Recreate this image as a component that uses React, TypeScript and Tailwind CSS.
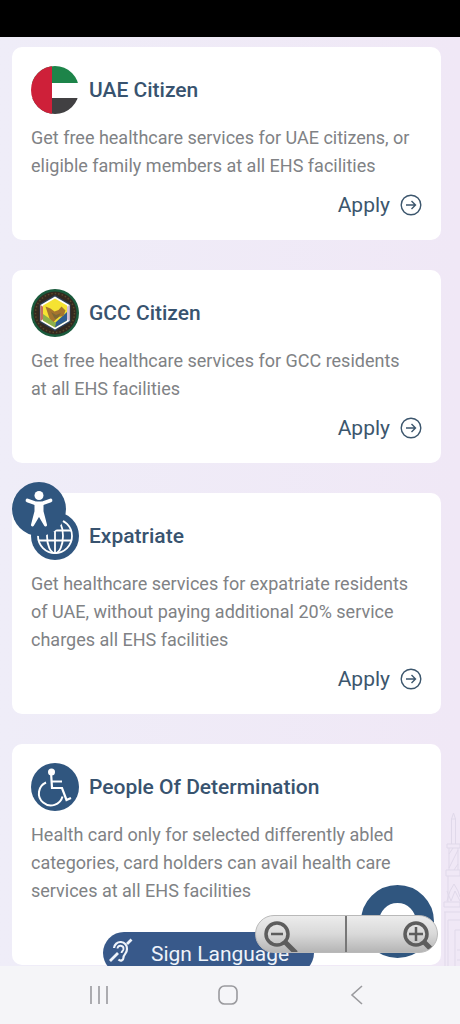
import React from 'react';

interface Service {
  id: string;
  title: string;
  description: string;
  icon: React.ReactNode;
}

const UaeFlag = () => (
  <svg className="size-12 shrink-0" viewBox="0 0 48 48" aria-hidden="true">
    <clipPath id="flag-clip">
      <circle cx="24" cy="24" r="24" />
    </clipPath>
    <g clipPath="url(#flag-clip)">
      <rect width="48" height="48" fill="#fff" />
      <rect width="48" height="17" fill="#1d8449" />
      <rect y="32" width="48" height="16" fill="#414042" />
      <rect width="21" height="48" fill="#ce2039" />
    </g>
  </svg>
);

const GccEmblem = () => (
  <svg className="size-12 shrink-0" viewBox="0 0 48 48" aria-hidden="true">
    <circle cx="24" cy="24" r="24" fill="#1a5a3c" />
    <circle cx="24" cy="24" r="21.500" fill="#33291f" />
    <circle cx="24" cy="24" r="19.500" fill="none" stroke="#5a4a2c" strokeWidth="1.500" strokeDasharray="1.5 2" />
    <path d="M24 6l15.500 9v18L24 42 8.500 33V15z" fill="#2b3f55" />
    <path d="M24 7.500l14.500 8.500v16L24 40.500 9.500 32V16z" fill="#fff" />
    <path d="M9.500 16l3 2v12l-3 2z" fill="#c2705f" />
    <path d="M38.500 16l-3 2v12l3 2z" fill="#d3bfd6" />
    <path d="M24 9.500l12 7v15l-12 7-12-7v-15z" fill="#f5e332" />
    <path d="M24 38.500l12-7V23L24 34z" fill="#2f5d92" />
    <path d="M12 25v6.500l12 7 1-4.500z" fill="#8db04c" />
    <path d="M14.500 17.500l5 2 4 3 4-1.500 3-3.500 4 4-2 5.500-5 1-5 5-4-3.500-2-6z" fill="#a5752f" />
    <path d="M20 23l5 3 5-2-3 5-3 1z" fill="#7f6a34" />
  </svg>
);

const GlobeIcon = () => (
  <svg className="size-12 shrink-0" viewBox="0 0 48 48" fill="none" stroke="#fff" strokeWidth="1.800" aria-hidden="true">
    <circle cx="24" cy="24" r="24" fill="#30567f" stroke="none" />
    <circle cx="24" cy="24" r="17" />
    <ellipse cx="24" cy="24" rx="8" ry="17" />
    <path d="M24 7v34M8 18.500h32M8 28.500h32" />
  </svg>
);

const WheelchairIcon = () => (
  <svg className="size-12 shrink-0" viewBox="0 0 48 48" fill="none" stroke="#fff" strokeWidth="2" aria-hidden="true">
    <circle cx="24" cy="24" r="24" fill="#30567f" stroke="none" />
    <circle cx="20.500" cy="9" r="3.500" fill="#fff" stroke="none" />
    <path d="M20 9l1 16h10l4.500 12 4.500-2M20 18.500h11" strokeWidth="2.200" />
    <path d="M15 19.500A12 12 0 1 0 31.500 33.500" />
  </svg>
);

const ArrowCircle = () => (
  <svg className="size-[22px]" viewBox="0 0 22 22" fill="none" stroke="currentColor" strokeWidth="1.400" aria-hidden="true">
    <circle cx="11" cy="11" r="9.800" />
    <path d="M6 11h9.500M11.500 7l4 4-4 4" />
  </svg>
);

const services: Service[] = [
  {
    id: 'uae',
    title: 'UAE Citizen',
    description: 'Get free healthcare services for UAE citizens, or eligible family members at all EHS facilities',
    icon: <UaeFlag />,
  },
  {
    id: 'gcc',
    title: 'GCC Citizen',
    description: 'Get free healthcare services for GCC residents at all EHS facilities',
    icon: <GccEmblem />,
  },
  {
    id: 'expatriate',
    title: 'Expatriate',
    description:
      'Get healthcare services for expatriate residents of UAE, without paying additional 20% service charges all EHS facilities',
    icon: <GlobeIcon />,
  },
  {
    id: 'determination',
    title: 'People Of Determination',
    description:
      'Health card only for selected differently abled categories, card holders can avail health care services at all EHS facilities',
    icon: <WheelchairIcon />,
  },
];

const ServiceCard = ({ service, showApply }: { service: Service; showApply: boolean }) => (
  <article className="rounded-[10px] bg-white px-[19px] pt-[19px] pb-[22px]">
    <div className="flex items-center gap-[10px]">
      {service.icon}
      <h2 className="text-[21px] leading-7 font-medium text-[#38536f]">{service.title}</h2>
    </div>
    <p className="mt-[10px] pr-1 text-[18px] leading-7 text-[#808285]">{service.description}</p>
    <div className="mt-3 flex h-[26px] justify-end">
      {showApply && (
        <a href={`#${service.id}`} className="flex items-center gap-[10px] text-[21px] leading-[26px] text-[#3c566d]">
          Apply
          <ArrowCircle />
        </a>
      )}
    </div>
  </article>
);

const Skyline = () => (
  <svg
    className="absolute right-0 bottom-0 h-[156px] w-[18px]"
    viewBox="0 0 18 156"
    fill="none"
    stroke="#e0d9ea"
    aria-hidden="true"
  >
    <path d="M9.500 34V9l1-3 1-3 1 3 1 3v25M9 9h5M5 34h13v4H5zM7 38v22M16 38v22M7 58l9-18M7 44l4-6M12 60l4-6M4 60h14v6H4zM6 66v26" />
    <path d="M5 91l3-10 4-7 4 7 2 6M5 81l4 10 4-10 5 10M2 92h16v5H2zM2 102h16M3 102v54M6 156v-46h12M13 156v-36h5M15 140h3M15 150h3" />
  </svg>
);

const ZoomControls = () => (
  <div className="absolute right-[22px] bottom-[13px] flex h-[38px] w-[183px] overflow-hidden rounded-full border border-[#b9b9b9] bg-linear-to-b from-[#ececec] via-[#d9d9d9] to-[#b5b5b5]">
    <button type="button" aria-label="Zoom out" className="flex w-1/2 items-start border-r-2 border-[#777] pt-[5px] pl-[6px]">
      <svg className="h-8 w-9" viewBox="0 0 36 32" fill="none" stroke="#5d5d5d" aria-hidden="true">
        <circle cx="15" cy="13" r="11" strokeWidth="3.500" />
        <path d="M9 13h12" strokeWidth="2.500" />
        <path d="M23 21l11 11" strokeWidth="5" />
      </svg>
    </button>
    <button type="button" aria-label="Zoom in" className="flex w-1/2 items-start justify-end pt-[5px]">
      <svg className="h-8 w-9" viewBox="0 0 36 32" fill="none" stroke="#5d5d5d" aria-hidden="true">
        <circle cx="15" cy="13" r="11" strokeWidth="3.500" />
        <path d="M8 13h14M15 6v14" strokeWidth="2.500" />
        <path d="M23 21l11 11" strokeWidth="5" />
      </svg>
    </button>
  </div>
);

const SystemNav = () => (
  <nav className="flex h-[58px] items-center justify-around bg-[#f5f5f8] pr-[39px] pl-[34px] text-[#9a9a9e]">
    <button type="button" aria-label="Recent apps">
      <svg className="size-5" viewBox="0 0 20 20" fill="none" stroke="currentColor" strokeWidth="1.600">
        <path d="M2 1v18M10 1v18M18 1v18" />
      </svg>
    </button>
    <button type="button" aria-label="Home">
      <svg className="size-5" viewBox="0 0 20 20" fill="none" stroke="currentColor" strokeWidth="1.600">
        <rect x="1" y="1" width="18" height="18" rx="5.500" />
      </svg>
    </button>
    <button type="button" aria-label="Back">
      <svg className="size-5" viewBox="0 0 20 20" fill="none" stroke="currentColor" strokeWidth="1.600">
        <path d="M15 1L5 10l10 9" />
      </svg>
    </button>
  </nav>
);

export default function App() {
  return (
    <div className="flex min-h-screen flex-col font-[Roboto,sans-serif]">
      <header className="h-[37px] bg-black" />

      <main className="relative flex-1 overflow-hidden bg-linear-to-r from-[#efedf8] to-[#f0e8f6] pt-[10px] pr-[19px] pb-px pl-3">
        <Skyline />
        <div className="relative flex flex-col gap-[30px]">
          {services.map((service) => (
            <ServiceCard key={service.id} service={service} showApply={service.id !== 'determination'} />
          ))}
        </div>

        {/* Floating accessibility menu */}
        <button
          type="button"
          aria-label="Accessibility options"
          className="absolute top-[445px] left-3 size-[54px] rounded-full bg-[#30567f]"
        >
          <svg viewBox="0 0 54 54" fill="none" stroke="#fff" strokeLinecap="round" strokeLinejoin="round" aria-hidden="true">
            <circle cx="27" cy="13.500" r="4.500" fill="#fff" stroke="none" />
            <path d="M15.500 18.500L24 21.500h6l8.500-3" strokeWidth="3.800" />
            <path d="M24 21.500h6v8L33.500 43 27 32l-6.500 11L24 29.500z" fill="#fff" strokeWidth="3" />
          </svg>
        </button>

        {/* Chat bubble */}
        <button
          type="button"
          aria-label="Chat"
          className="absolute right-[26px] bottom-2 size-[73px] rounded-full border-[18px] border-[#30567f] bg-white"
        />

        <button
          type="button"
          className="absolute -bottom-2 left-[103px] flex h-[42px] w-[211px] items-center gap-[18px] rounded-full bg-[#38598a] pt-1 pl-1 text-[21px] text-[#eef3fa]"
        >
          <svg className="mb-2 size-[26px] shrink-0" viewBox="0 0 26 26" fill="none" stroke="currentColor" strokeWidth="2.200" aria-hidden="true">
            <path d="M3 23l8-8M20 6l4.500-4.500" strokeWidth="2.800" />
            <path d="M7 10a6.500 6.500 0 0 1 13 1c0 5-3.500 5-3.500 8.500 0 3-3 4-5 2" />
            <path d="M10.500 10.500a3 3 0 0 1 6 .5c0 2-2 2-2 4" strokeWidth="1.800" />
          </svg>
          Sign Language
        </button>

        <ZoomControls />
      </main>

      <SystemNav />
    </div>
  );
}
